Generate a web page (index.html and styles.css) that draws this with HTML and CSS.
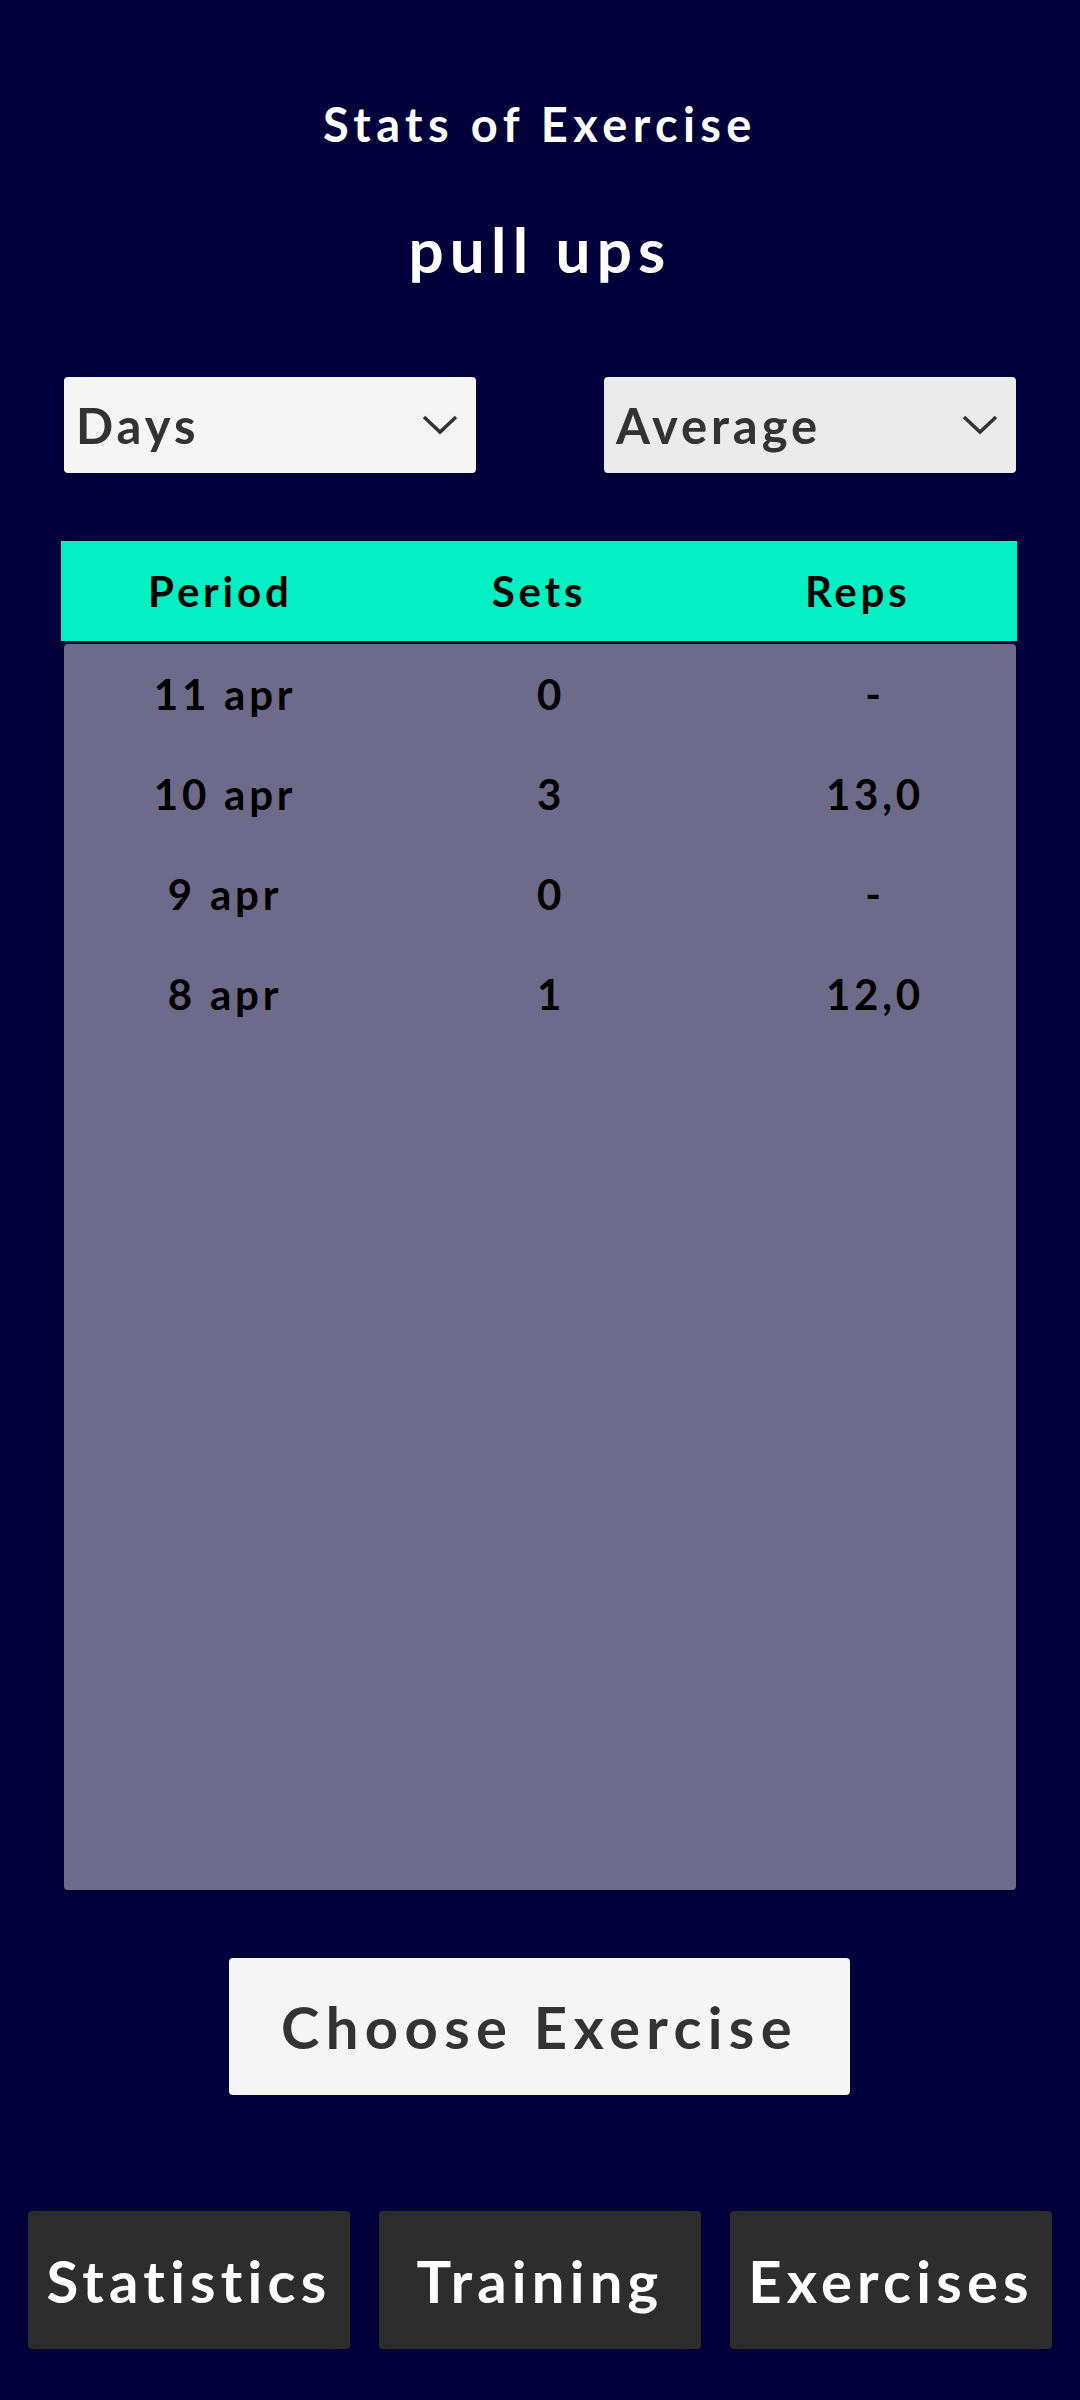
FILE: index.html
```html
<!DOCTYPE html>
<html>
<head>
<meta charset="utf-8">
<link rel="stylesheet" href="styles.css">
</head>
<body>
<div class="page">
  <h1 class="title">Stats of Exercise</h1>
  <h2 class="subtitle">pull ups</h2>
  <div class="controls">
    <div class="select select-light">
      <span class="select-text">Days</span>
      <svg class="chevron" width="36" height="22" viewBox="0 0 36 22"><polyline points="2,3 18,18 34,3" fill="none" stroke="#333" stroke-width="3.5"/></svg>
    </div>
    <div class="select select-grey">
      <span class="select-text">Average</span>
      <svg class="chevron" width="36" height="22" viewBox="0 0 36 22"><polyline points="2,3 18,18 34,3" fill="none" stroke="#333" stroke-width="3.5"/></svg>
    </div>
  </div>
  <div class="table-head">
    <div class="cell">Period</div>
    <div class="cell">Sets</div>
    <div class="cell">Reps</div>
  </div>
  <div class="table-body">
    <div class="row"><div class="cell">11 apr</div><div class="cell">0</div><div class="cell">-</div></div>
    <div class="row"><div class="cell">10 apr</div><div class="cell">3</div><div class="cell">13,0</div></div>
    <div class="row"><div class="cell">9 apr</div><div class="cell">0</div><div class="cell">-</div></div>
    <div class="row"><div class="cell">8 apr</div><div class="cell">1</div><div class="cell">12,0</div></div>
  </div>
  <div class="choose-wrap">
    <div class="choose-btn">Choose Exercise</div>
  </div>
  <div class="nav">
    <div class="nav-btn">Statistics</div>
    <div class="nav-btn">Training</div>
    <div class="nav-btn">Exercises</div>
  </div>
</div>
</body>
</html>
```
FILE: styles.css
```css
html, body {
  margin: 0;
  padding: 0;
  background: #02003a;
}
body {
  width: 1080px;
  height: 2400px;
  font-family: Lato, "Liberation Sans", Arial, sans-serif;
  font-weight: 700;
  overflow: hidden;
}
.page {
  padding-top: 94px;
}
.title {
  margin: 0;
  font-size: 47px;
  line-height: 60px;
  font-weight: 700;
  letter-spacing: 0.115em;
  color: #ffffff;
  text-align: center;
}
.subtitle {
  margin: 57px 0 0 0;
  font-size: 62px;
  line-height: 76px;
  font-weight: 700;
  letter-spacing: 0.1em;
  color: #ffffff;
  text-align: center;
}
.controls {
  margin-top: 90px;
  padding: 0 64px;
  display: flex;
  justify-content: space-between;
}
.select {
  width: 412px;
  height: 96px;
  border-radius: 4px;
  box-sizing: border-box;
  display: flex;
  align-items: center;
  justify-content: space-between;
  padding: 0 18px 0 12px;
}
.select-light { background: #f5f5f5; }
.select-grey { background: #ebebeb; }
.select-text {
  font-size: 49px;
  color: #333333;
  letter-spacing: 0.08em;
}
.chevron { display: block; }
.table-head {
  margin: 68px 0 0 61px;
  width: 956px;
  height: 100px;
  background: #00f0c2;
  display: grid;
  grid-template-columns: repeat(3, 1fr);
}
.cell {
  text-align: center;
  font-size: 42px;
  line-height: 100px;
  color: #000000;
  letter-spacing: 0.09em;
}
.table-body {
  margin: 3px 0 0 64px;
  width: 952px;
  height: 1246px;
  background: #6e6b8a;
  border-radius: 4px;
  overflow: hidden;
}
.row {
  display: grid;
  grid-template-columns: 322px 330px 318px;
  height: 100px;
}
.choose-wrap {
  margin-top: 68px;
  padding-left: 229px;
}
.choose-btn {
  width: 621px;
  height: 137px;
  background: #f5f5f5;
  border-radius: 4px;
  display: flex;
  align-items: center;
  justify-content: center;
  font-size: 58px;
  color: #333333;
  letter-spacing: 0.11em;
}
.nav {
  margin-top: 116px;
  padding: 0 28px;
  display: flex;
  justify-content: space-between;
}
.nav-btn {
  width: 322px;
  height: 138px;
  background: #2d2d2d;
  border-radius: 4px;
  display: flex;
  align-items: center;
  justify-content: center;
  font-size: 58px;
  color: #ffffff;
  letter-spacing: 0.09em;
}
```
